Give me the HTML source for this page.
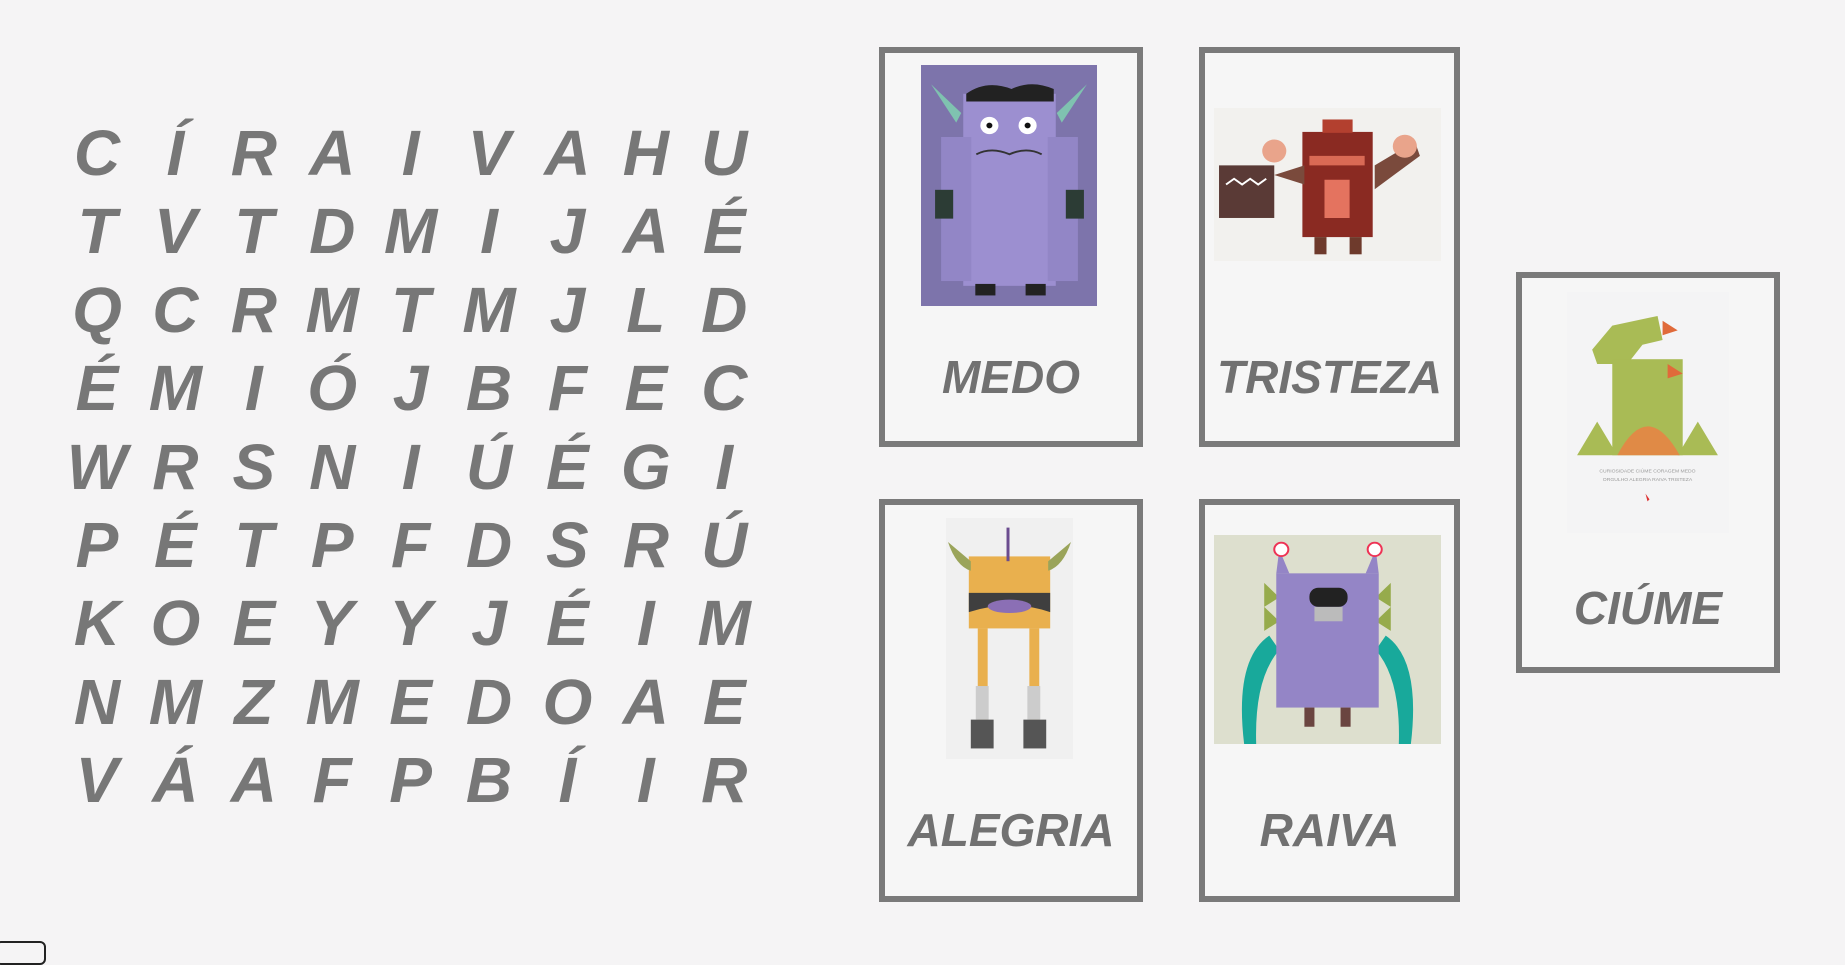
<!DOCTYPE html>
<html><head><meta charset="utf-8"><style>
html,body{margin:0;padding:0;width:1845px;height:946px;overflow:hidden;background:#f5f4f5;font-family:"Liberation Sans","DejaVu Sans",sans-serif;}
.l{position:absolute;width:78px;text-align:center;font-size:64px;font-weight:bold;font-style:italic;color:#777;line-height:78px;}
.card{position:absolute;border:6px solid #7a7a7a;box-sizing:border-box;background:#f6f6f6;}
.lab{position:absolute;text-align:center;font-size:46px;font-weight:bold;font-style:italic;color:#717171;}
.img{position:absolute;overflow:hidden;}
</style></head><body>
<div id="grid"></div>
<script>
var rows=["CÍRAIVAHU","TVTDMIJAÉ","QCRMTMJLD","ÉMIÓJBFEC","WRSNIÚÉGI","PÉTPFDSRÚ","KOEYYJÉIM","NMZMEDOAE","VÁAFPBÍIR"];
var h="";
for(var r=0;r<9;r++){for(var c=0;c<9;c++){var x=97+c*78.4-39,y=153+r*78.4-39;h+='<div class="l" style="left:'+x+'px;top:'+y+'px">'+rows[r][c]+'</div>';}}
document.getElementById("grid").innerHTML=h;
</script>
<div class="card" style="left:879px;top:47px;width:264px;height:400px"></div>
<div class="card" style="left:1199px;top:47px;width:261px;height:400px"></div>
<div class="card" style="left:879px;top:499px;width:264px;height:403px"></div>
<div class="card" style="left:1199px;top:499px;width:261px;height:403px"></div>
<div class="card" style="left:1516px;top:272px;width:264px;height:401px"></div>

<div class="lab" style="left:879px;width:264px;top:350px">MEDO</div>
<div class="lab" style="left:1199px;width:261px;top:350px">TRISTEZA</div>
<div class="lab" style="left:879px;width:264px;top:803px">ALEGRIA</div>
<div class="lab" style="left:1199px;width:261px;top:803px">RAIVA</div>
<div class="lab" style="left:1516px;width:264px;top:581px">CIÚME</div>

<!-- MEDO -->
<svg class="img" style="left:921px;top:65px" width="176" height="241" viewBox="0 0 175 251" preserveAspectRatio="none">
<rect width="175" height="251" fill="#7d74ab"/>
<rect x="42" y="30" width="92" height="200" fill="#9c8fd0"/>
<rect x="20" y="75" width="30" height="150" fill="#9286c6"/>
<rect x="126" y="75" width="30" height="150" fill="#9286c6"/>
<rect x="14" y="130" width="18" height="30" fill="#2c3c35"/>
<rect x="144" y="130" width="18" height="30" fill="#2c3c35"/>
<path d="M45 30 Q65 15 90 25 Q110 15 132 25 L132 38 L45 38Z" fill="#222"/>
<path d="M10 20 L40 50 L35 60 Z" fill="#7fc2b0"/><path d="M165 20 L135 50 L140 60Z" fill="#7fc2b0"/>
<circle cx="68" cy="63" r="9" fill="#fff"/><circle cx="106" cy="63" r="9" fill="#fff"/>
<circle cx="68" cy="63" r="3" fill="#111"/><circle cx="106" cy="63" r="3" fill="#111"/>
<path d="M55 93 Q70 85 88 93 Q105 85 120 93" stroke="#333" stroke-width="2" fill="none"/>
<rect x="54" y="228" width="20" height="12" fill="#222"/><rect x="104" y="228" width="20" height="12" fill="#222"/>
</svg>
<!-- TRISTEZA -->
<svg class="img" style="left:1214px;top:108px" width="227" height="153" viewBox="0 0 226 160" preserveAspectRatio="none">
<rect width="226" height="160" fill="#f2f1ee"/>
<rect x="5" y="60" width="55" height="55" fill="#5a3a36"/><path d="M12 80 l8 -6 8 6 8 -6 8 6 8 -6" stroke="#fff" stroke-width="2" fill="none"/>
<rect x="88" y="25" width="70" height="110" fill="#8a2a22"/>
<rect x="108" y="12" width="30" height="14" fill="#b3402f"/>
<path d="M95 50 h55 v10 h-55z" fill="#d96a55"/><path d="M110 75 h25 v40 h-25z" fill="#e4735f"/>
<path d="M60 70 L90 60 L90 80 Z" fill="#7a4a3c"/><path d="M160 60 L200 35 L205 50 L160 85Z" fill="#7a4a3c"/>
<circle cx="60" cy="45" r="12" fill="#e9a48b"/><circle cx="190" cy="40" r="12" fill="#e9a48b"/>
<rect x="100" y="135" width="12" height="18" fill="#6e3a2c"/><rect x="135" y="135" width="12" height="18" fill="#6e3a2c"/>
</svg>
<!-- ALEGRIA -->
<svg class="img" style="left:946px;top:518px" width="127" height="241" viewBox="0 0 128 251" preserveAspectRatio="none">
<rect width="128" height="251" fill="#f0f0f0"/>
<rect x="23" y="40" width="82" height="75" fill="#e9b04e"/>
<rect x="61" y="10" width="3" height="35" fill="#6b4c8f"/>
<path d="M2 25 Q10 50 25 55 L25 45Z" fill="#9aa45a"/><path d="M126 25 Q118 50 103 55 L103 45Z" fill="#9aa45a"/>
<path d="M23 78 h82 v20 q-40 -14 -82 0z" fill="#3f3f3f"/><ellipse cx="64" cy="92" rx="22" ry="7" fill="#8b6fb5"/>
<rect x="32" y="115" width="10" height="95" fill="#e9b04e"/><rect x="84" y="115" width="10" height="95" fill="#e9b04e"/>
<rect x="30" y="175" width="13" height="35" fill="#ccc"/><rect x="82" y="175" width="13" height="35" fill="#ccc"/>
<rect x="25" y="210" width="23" height="30" fill="#555"/><rect x="78" y="210" width="23" height="30" fill="#555"/>
</svg>
<!-- RAIVA -->
<svg class="img" style="left:1214px;top:535px" width="227" height="209" viewBox="0 0 226 218" preserveAspectRatio="none">
<rect width="226" height="218" fill="#dddfce"/>
<path d="M55 105 Q20 130 30 218 L42 218 Q40 150 65 120Z" fill="#18a99b"/>
<path d="M171 105 Q206 130 196 218 L184 218 Q186 150 161 120Z" fill="#18a99b"/>
<path d="M50 50 l15 15 -15 10z M50 75 l15 15 -15 10z" fill="#96ab4c"/>
<path d="M176 50 l-15 15 15 10z M176 75 l-15 15 15 10z" fill="#96ab4c"/>
<rect x="62" y="40" width="102" height="140" fill="#9485c6"/>
<path d="M62 40 L65 15 L75 40Z M164 40 L161 15 L151 40Z" fill="#9485c6"/>
<circle cx="67" cy="15" r="7" fill="#fff" stroke="#e35" stroke-width="2"/><circle cx="160" cy="15" r="7" fill="#fff" stroke="#e35" stroke-width="2"/>
<rect x="95" y="55" width="38" height="20" rx="9" fill="#222"/>
<rect x="100" y="75" width="28" height="15" fill="#bbb"/>
<rect x="90" y="180" width="10" height="20" fill="#6a4540"/><rect x="126" y="180" width="10" height="20" fill="#6a4540"/>
</svg>
<!-- CIUME -->
<svg class="img" style="left:1567px;top:292px" width="162" height="241" viewBox="0 0 161 251" preserveAspectRatio="none">
<rect width="161" height="251" fill="#f4f4f5"/>
<path d="M25 60 L45 35 L90 25 L95 50 L75 55 L60 75 L30 75Z" fill="#a9bb55"/>
<rect x="45" y="70" width="70" height="100" fill="#a9bb55"/>
<path d="M10 170 L30 135 L50 170Z M110 170 L130 135 L150 170Z" fill="#a9bb55"/>
<path d="M50 170 Q80 110 112 170Z" fill="#e08a46"/>
<path d="M95 30 l15 10 -15 5z M100 75 l15 10 -15 5z" fill="#e06a3a"/>
<text x="80" y="188" font-size="5" fill="#999" text-anchor="middle" font-family="Liberation Sans">CURIOSIDADE CIÚME CORAGEM MEDO</text>
<text x="80" y="197" font-size="5" fill="#999" text-anchor="middle" font-family="Liberation Sans">ORGULHO ALEGRIA RAIVA TRISTEZA</text>
<path d="M78 210 l4 6 -2 2z" fill="#d33"/>
</svg>
<div style="position:absolute;left:-5px;top:941px;width:47px;height:20px;border:2px solid #222;border-radius:6px;"></div>
</body></html>
